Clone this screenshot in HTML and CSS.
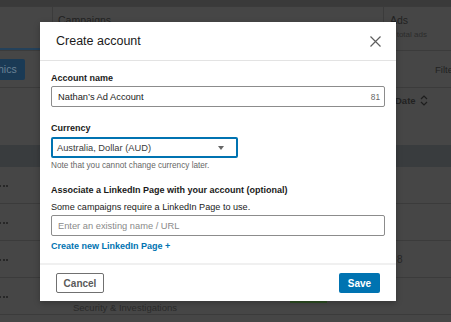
FILE: index.html
```html
<!DOCTYPE html>
<html lang="en">
<head>
    <meta charset="UTF-8">
    <meta name="viewport" content="width=device-width, initial-scale=1.0">
    <title>Create account</title>
    <link rel="stylesheet" href="styles.css">
</head>
<body>
    <!-- campaign manager page behind the dialog -->
    <div class="page">
        <div class="topbar"></div>

        <div class="summary">
            <div class="tab-cell"></div>
            <div class="sum-cell campaigns">Campaigns</div>
            <div class="sum-cell ads">
                <div>Ads</div>
                <div class="sub">2 total ads</div>
            </div>
        </div>

        <div class="toolbar">
            <button class="tab-btn">Demographics</button>
            <span class="filters">Filters</span>
        </div>

        <div class="colhead">
            <span></span>
            <span class="sort">Date
                <svg width="8" height="11" viewBox="0 0 8 11"><path d="M1 4 L4 1 L7 4 M1 7 L4 10 L7 7" fill="none" stroke="#1e1e1e" stroke-width="1.2"/></svg>
            </span>
        </div>

        <div class="band"></div>

        <div class="row"><span class="dots"><i></i><i></i><i></i></span><span></span><span></span><span></span></div>
        <div class="row"><span class="dots"><i></i><i></i><i></i></span><span></span><span></span><span></span></div>
        <div class="row"><span class="dots"><i></i><i></i><i></i></span><span></span><span></span><span class="num">8</span></div>
        <div class="row">
            <span class="dots"><i></i><i></i><i></i></span>
            <span class="name">
                <span>Brand Awareness</span>
                <span class="name-sub">Security &amp; Investigations</span>
            </span>
            <span class="status"><i class="bar"></i></span>
            <span></span>
        </div>
    </div>

    <!-- dialog -->
    <div class="modal">
        <div class="modal-header">
            <h2>Create account</h2>
            <svg class="close" width="11" height="11" viewBox="0 0 11 11"><path d="M0.5 0.5 L10.5 10.5 M10.5 0.5 L0.5 10.5" stroke="#5e5e5e" stroke-width="1.2"/></svg>
        </div>

        <div class="modal-body">
            <div class="field">
                <label>Account name</label>
                <div class="input">
                    <span>Nathan’s Ad Account</span>
                    <span class="count">81</span>
                </div>
            </div>

            <div class="field">
                <label>Currency</label>
                <div class="select">
                    <span>Australia, Dollar (AUD)</span>
                    <i class="caret"></i>
                </div>
                <p class="note">Note that you cannot change currency later.</p>
            </div>

            <div class="field page-field">
                <label>Associate a LinkedIn Page with your account (optional)</label>
                <p class="hint">Some campaigns require a LinkedIn Page to use.</p>
                <div class="input">
                    <span class="placeholder">Enter an existing name / URL</span>
                </div>
                <a class="link">Create new LinkedIn Page +</a>
            </div>
        </div>

        <div class="modal-footer">
            <button class="btn secondary">Cancel</button>
            <button class="btn primary">Save</button>
        </div>
    </div>
</body>
</html>
```

FILE: styles.css
```css
:root {
    --dim: #464646;
    --dim-line: #3b3b3b;
    --dim-text: #222;
    --blue: #0073b1;
    --text: #1a1a1a;
    --muted: #666;
}

* {
    box-sizing: border-box;
    margin: 0;
    padding: 0;
}

body {
    width: 451px;
    height: 322px;
    overflow: hidden;
    position: relative;
    background: var(--dim);
    font-family: "Liberation Sans", Arial, sans-serif;
}

/* 背景页面 */
.page {
    height: 322px;
    overflow: hidden;
    color: var(--dim-text);
}

.topbar {
    height: 6px;
    background: #3a3a3a;
}

.summary {
    display: flex;
    height: 45px;
    border-top: 1px solid var(--dim-line);
    border-bottom: 1px solid var(--dim-line);
}

.tab-cell {
    width: 53px;
    border-right: 1px solid var(--dim-line);
    border-bottom: 2px solid #24415a;
}

.sum-cell {
    padding-top: 7px;
    font-size: 10.5px;
    line-height: 13px;
}

.campaigns {
    flex: 1;
    padding-left: 5px;
    border-right: 1px solid var(--dim-line);
}

.ads {
    width: 67px;
    padding-left: 6px;
}

.ads .sub {
    font-size: 8px;
    line-height: 10px;
    margin-top: 3px;
    color: #2c2c2c;
}

.toolbar {
    height: 37px;
    display: flex;
    align-items: center;
    justify-content: space-between;
    border-bottom: 1px solid var(--dim-line);
    white-space: nowrap;
}

.tab-btn {
    margin-left: -59px;
    height: 21px;
    padding: 0 8px;
    border: none;
    border-radius: 2px;
    background: #1a3a55;
    color: #6a8296;
    font-family: inherit;
    font-size: 10.5px;
}

.filters {
    width: 16px;
    overflow: hidden;
    font-size: 9.5px;
}

.colhead {
    height: 57px;
    display: grid;
    grid-template-columns: 395px 1fr;
    padding-top: 7px;
}

.sort {
    display: flex;
    gap: 4px;
    align-items: center;
    height: 11px;
    font-size: 9.5px;
    font-weight: bold;
}

.band {
    height: 22px;
    background: #393c3e;
}

.row {
    height: 37px;
    display: grid;
    grid-template-columns: 73px 217px 107px 1fr;
    align-items: center;
    border-bottom: 1px solid var(--dim-line);
}

.dots {
    display: flex;
    gap: 1.5px;
    margin-left: -1px;
    padding-top: 2px;
}

.dots i {
    width: 2px;
    height: 2px;
    border-radius: 50%;
    background: #1e1e1e;
}

.num {
    font-size: 10px;
    color: #262626;
}

.name {
    display: flex;
    flex-direction: column;
    gap: 2px;
    padding-top: 9px;
    font-size: 9.5px;
    line-height: 12px;
}

.name-sub {
    color: #2a2a2a;
}

.status {
    align-self: stretch;
    display: flex;
    align-items: flex-end;
    padding-bottom: 11px;
}

.bar {
    display: block;
    width: 37px;
    height: 6px;
    background: #2e4d24;
}

/* 弹窗样式 */
.modal {
    position: absolute;
    left: 40px;
    top: 22px;
    width: 356px;
    height: 279px;
    background: white;
    display: flex;
    flex-direction: column;
    box-shadow: 0 2px 6px rgba(0,0,0,0.25);
    color: var(--text);
}

.modal-header {
    height: 39px;
    flex-shrink: 0;
    display: flex;
    align-items: center;
    justify-content: space-between;
    padding: 0 15px 0 16px;
    border-bottom: 1px solid #e3e3e3;
}

.modal-header h2 {
    font-size: 12.5px;
    font-weight: normal;
    color: var(--text);
}

.modal-body {
    flex: 1;
    padding: 12px 11px 11px;
}

.field {
    margin-bottom: 16px;
}

.field label {
    display: block;
    font-size: 9px;
    line-height: 11px;
    font-weight: bold;
    margin-bottom: 2px;
}

.input,
.select {
    height: 21px;
    display: flex;
    align-items: center;
    justify-content: space-between;
    font-size: 9.3px;
    white-space: nowrap;
}

.input {
    border: 1px solid #8c8c8c;
    border-radius: 2px;
    padding: 0 4px 0 6px;
}

.count {
    font-size: 8.3px;
    color: var(--muted);
}

.placeholder {
    color: #8a8a8a;
}

.select {
    width: 187px;
    margin-top: 3px;
    border: 2px solid var(--blue);
    border-radius: 2px;
    padding: 0 12px 0 4px;
    color: #3a3a3a;
}

.caret {
    width: 0;
    height: 0;
    border-left: 3.5px solid transparent;
    border-right: 3.5px solid transparent;
    border-top: 4px solid #666;
}

.note {
    margin-top: 3px;
    font-size: 8.2px;
    line-height: 10px;
    color: var(--muted);
}

.page-field {
    margin-top: -2px;
    margin-bottom: 0;
}

.hint {
    margin-top: 6px;
    font-size: 9.1px;
    line-height: 11px;
    margin-bottom: 2px;
}

.link {
    display: block;
    margin-top: 5px;
    font-size: 9px;
    line-height: 11px;
    font-weight: bold;
    color: var(--blue);
}

.modal-footer {
    height: 38px;
    flex-shrink: 0;
    display: flex;
    align-items: center;
    justify-content: space-between;
    padding: 0 16px;
    border-top: 2px solid #f0f0f0;
}

.btn {
    height: 20px;
    font-family: inherit;
    font-size: 10px;
    font-weight: bold;
    border-radius: 2px;
}

.secondary {
    width: 48px;
    background: white;
    border: 1px solid #707070;
    color: #5a5a5a;
}

.primary {
    width: 41px;
    background: var(--blue);
    border: none;
    color: white;
}
```
